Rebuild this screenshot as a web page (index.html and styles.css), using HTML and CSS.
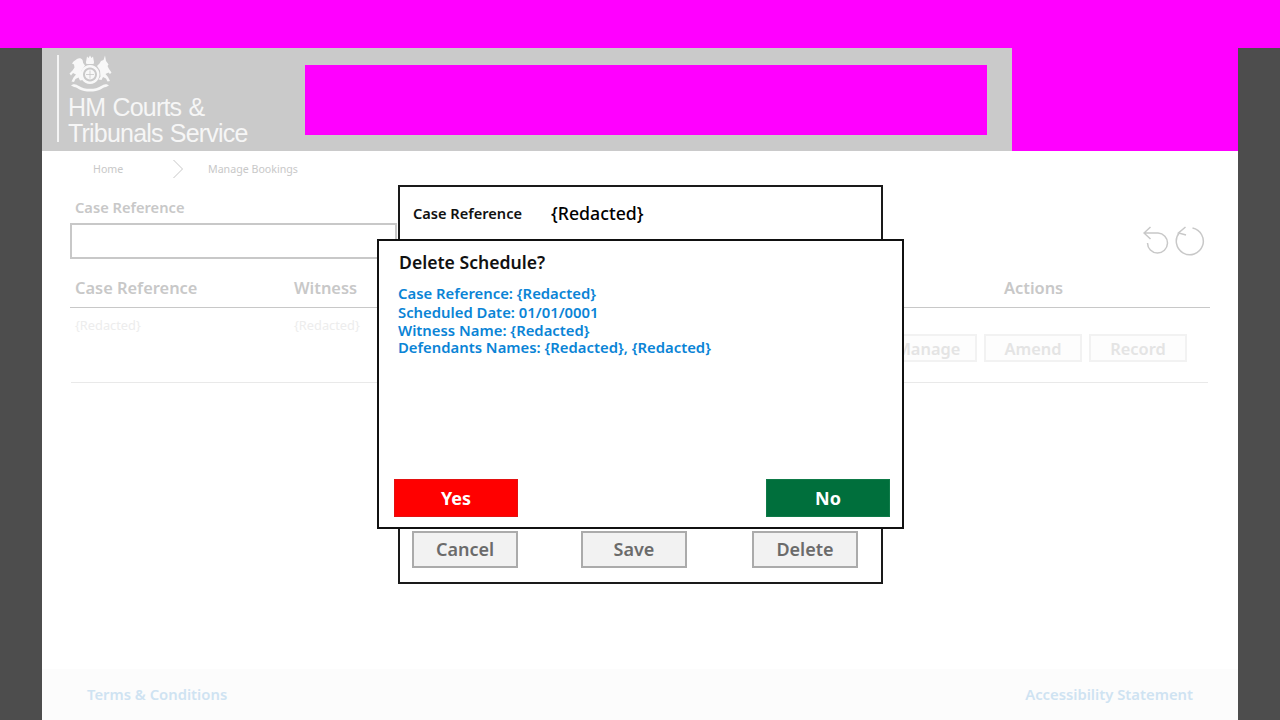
FILE: index.html
```html
<!DOCTYPE html>
<html lang="en">
<head>
<meta charset="utf-8">
<title>Manage Bookings</title>
<link rel="stylesheet" href="styles.css">
</head>
<body>
<div class="topbar"></div>
<div class="shell">
  <header class="header">
    <div class="brand">
      <div class="logo">
        <svg class="crest" viewBox="0 0 44 37" width="44" height="37" aria-hidden="true">
          <g fill="#f8f8f8">
            <path d="M19 1.500l1.500 1.500L22 .5 23.500 3 25 1.500l.8 4.500c.4 1.200.2 2.200-.3 3h-7c-.5-.8-.7-1.800-.3-3z"/>
            <path d="M22 10a9.500 9.500 0 1 0 .01 0zm0 2.500a7 7 0 1 1-.01 0z"/>
            <circle cx="22" cy="19.500" r="5"/>
            <path d="M9 4c2-1.500 4.500-1 5.500 1 .6 1.200.2 2.400 1 3.500l1.500 2-3.500 5-.5 6 2 3.500-3 .5-1.500-3-3 1.500-1.500 3-2.500-.5 2-4 2.500-3-3-1.500-2 2.500-1.500-2 3-3 2-3-.5-3-2-1 1.500-2z"/>
            <path d="M37 .5l-1.500 4.500-2.500 1-1.500 2.500-2.500 2.500 3 4.500.5 6-2 3 3 .5 1.500-3 3 1.500 1.500 3 2.500-.5-2-4-2.500-3 3-1.500 1.500 1.500 1.500-1.500-2.500-3.500-1.500-3 1-1.500-1-1.500-1.500-2z"/>
            <path d="M3 30.500c3-2.500 5.500-1 8 .5 3 2 6.500 2.800 11 2.800s8-.8 11-2.800c2.500-1.500 5-3 8-.5l-3 1.500c-2 .2-3.500 1-5 2.200-3 1.800-7 2.300-11 2.300s-8-.5-11-2.300c-1.500-1.200-3-2-5-2.200z"/>
          </g>
          <path d="M22 15.500v8M18 19.500h8" stroke="#c8c8c8" stroke-width=".8"/>
        </svg>
        <div class="logo-text">HM Courts &amp;<br>Tribunals Service</div>
      </div>
      <div class="redaction-bar"></div>
    </div>
    <div class="redaction-side"></div>
  </header>

  <main class="main">
    <nav class="crumbs">
      <span class="crumb-home">Home</span>
      <svg class="crumb-sep" viewBox="0 0 12 20" width="12" height="20" aria-hidden="true"><path d="M1.500 1l9 9-9 9" fill="none" stroke="#c8c8c8" stroke-width="1"/></svg>
      <span class="crumb-page">Manage Bookings</span>
    </nav>

    <div class="search">
      <div class="field">
        <label class="field-label">Case Reference</label>
        <div class="field-input"></div>
      </div>
      <div class="history">
        <svg viewBox="0 0 30 32" width="30" height="32" aria-hidden="true"><path d="M1 8h14a10 10 0 1 1-10.500 10M7.500 2L1 8l6.500 6" fill="none" stroke="#c8c8c8" stroke-width="1.500"/></svg>
        <svg viewBox="0 0 30 32" width="30" height="32" aria-hidden="true"><path d="M17.500 3a13.500 13.500 0 1 1-13 4.500M10.500 2L3.500 8l7.500 2" fill="none" stroke="#c8c8c8" stroke-width="1.500"/></svg>
      </div>
    </div>

    <div class="table-head">
      <span class="col-case">Case Reference</span>
      <span class="col-witness">Witness</span>
      <span class="col-actions">Actions</span>
    </div>
    <div class="table-row">
      <span class="cell col-case">{Redacted}</span>
      <span class="cell col-witness">{Redacted}</span>
      <div class="row-actions">
        <span class="ghost-btn">Manage</span>
        <span class="ghost-btn">Amend</span>
        <span class="ghost-btn">Record</span>
      </div>
    </div>
  </main>

  <footer class="footer">
    <span>Terms &amp; Conditions</span>
    <span>Accessibility Statement</span>
  </footer>
</div>

<section class="dialog-back">
  <div class="detail-line">
    <span class="detail-label">Case Reference</span>
    <span class="detail-value">{Redacted}</span>
  </div>
  <div class="back-actions">
    <button class="grey-btn">Cancel</button>
    <button class="grey-btn">Save</button>
    <button class="grey-btn">Delete</button>
  </div>
</section>

<section class="dialog-front">
  <h2 class="dialog-title">Delete Schedule?</h2>
  <div class="dialog-info">
    <div class="info-a">Case Reference: {Redacted}</div>
    <div class="info-b">Scheduled Date: 01/01/0001</div>
    <div class="info-c">Witness Name: {Redacted}</div>
    <div class="info-c">Defendants Names: {Redacted}, {Redacted}</div>
  </div>
  <div class="dialog-actions">
    <button class="btn-yes">Yes</button>
    <button class="btn-no">No</button>
  </div>
</section>
</body>
</html>
```
FILE: styles.css
```css
* { box-sizing: border-box; }
html, body { margin: 0; height: 720px; overflow: hidden; }
body { background: #4d4d4d; font-family: "Noto Sans", "Open Sans", sans-serif; position: relative; }

.topbar { height: 48px; background: #ff00ff; }
.shell { width: 1196px; height: 672px; margin: 0 auto; background: #fff; display: flex; flex-direction: column; }

.header { height: 103px; display: flex; flex: none; }
.brand { width: 970px; background: #cacaca; display: flex; align-items: flex-start; padding: 7px 25px 0 15px; justify-content: space-between; }
.redaction-side { flex: 1; background: #ff00ff; }
.redaction-bar { width: 682px; height: 70px; margin-top: 10px; background: #ff00ff; }
.logo { border-left: 2px solid #f4f4f4; height: 87px; padding-left: 9px; color: #f6f6f6; }
.crest { display: block; }
.logo-text { font-family: "Liberation Sans", Arial, sans-serif; font-size: 25px; line-height: 26px; letter-spacing: -.8px; word-spacing: 1px; margin-top: 2px; white-space: nowrap; }

.main { flex: 1; display: flex; flex-direction: column; }
.crumbs { height: 35px; display: flex; align-items: center; font-size: 10.650px; color: #c8c8c8; padding-left: 51px; }
.crumb-home { width: 78px; }
.crumb-sep { margin-left: 1px; }
.crumb-page { margin-left: 24px; }

.search { display: flex; justify-content: space-between; padding: 11px 33px 0 28px; height: 84px; }
.field { width: 327px; }
.field-label { display: block; font-size: 14.670px; font-weight: 600; color: #c8c8c8; line-height: 20px; padding-left: 5px; }
.field-input { height: 36px; margin-top: 6px; border: 2px solid #c8c8c8; background: #fff; }
.history { display: flex; gap: 2px; margin-top: 28px; align-items: flex-start; }

.table-head { display: flex; align-items: center; height: 38px; margin: 0 28px; border-bottom: 1px solid #c8c8c8; font-size: 16.400px; font-weight: 600; color: #c8c8c8; padding-bottom: 3px; }
.col-case { width: 224px; padding-left: 5px; flex: none; }
.col-witness { width: 710px; flex: none; }
.col-actions { flex: none; }
.table-row { display: flex; height: 75px; margin: 0 30px 0 29px; border-bottom: 1px solid #e9e9e9; padding-top: 9px; align-items: flex-start; }
.cell { font-size: 12.800px; color: #ededed; line-height: 17px; }
.table-row .col-case { width: 223px; padding-left: 4px; }
.table-row .col-witness { width: 200px; }
.row-actions { margin-left: auto; margin-right: 21px; display: flex; gap: 7px; margin-top: 17px; }
.ghost-btn { display: block; width: 98px; height: 28px; border: 2px solid #f2f2f2; background: #fdfdfd; color: #e4e4e4; font-size: 16.400px; font-weight: 600; text-align: center; line-height: 26px; }

.footer { height: 51px; margin-top: auto; flex: none; background: #fcfcfc; display: flex; justify-content: space-between; align-items: center; padding: 0 45px 2px; font-size: 14.800px; font-weight: 600; color: #cfe3f2; }

.dialog-back { position: absolute; left: 398px; top: 185px; width: 485px; height: 399px; background: #fff; border: 2px solid #1a1a1a; display: flex; flex-direction: column; justify-content: space-between; }
.detail-line { display: flex; align-items: center; padding: 14px 0 0 13px; }
.detail-label { width: 138px; font-size: 14.600px; font-weight: 600; color: #111; }
.detail-value { font-size: 17.700px; font-weight: 500; color: #000; }
.back-actions { display: flex; justify-content: space-between; padding: 0 23px 14px 12px; }
.grey-btn { width: 106px; height: 37px; background: #f2f2f2; border: 2px solid #ababab; font-family: inherit; font-size: 18px; font-weight: 600; color: #6b6b6b; padding: 0 0 2px; }
.grey-btn:nth-child(2) { margin-left: -2px; }

.dialog-front { position: absolute; left: 377px; top: 239px; width: 527px; height: 290px; background: #fff; border: 2px solid #111; display: flex; flex-direction: column; padding: 0 12px 10px 15px; }
.dialog-title { margin: 9px 0 0 5px; font-size: 17.600px; font-weight: 600; line-height: 25px; color: #111; }
.dialog-info { margin: 9px 0 0 4px; font-size: 14.850px; font-weight: 600; color: #0a84d6; line-height: 19px; }
.info-c { margin-top: -1px; line-height: 18px; }
.dialog-actions { margin-top: auto; display: flex; justify-content: space-between; }
.btn-yes, .btn-no { width: 124px; height: 38px; border: 1px solid; color: #fff; font-family: inherit; font-size: 18px; font-weight: 700; padding: 0; }
.btn-yes { background: #ff0000; border-color: #e31111; }
.btn-no { background: #006f3c; border-color: #0e7a48; }
```
